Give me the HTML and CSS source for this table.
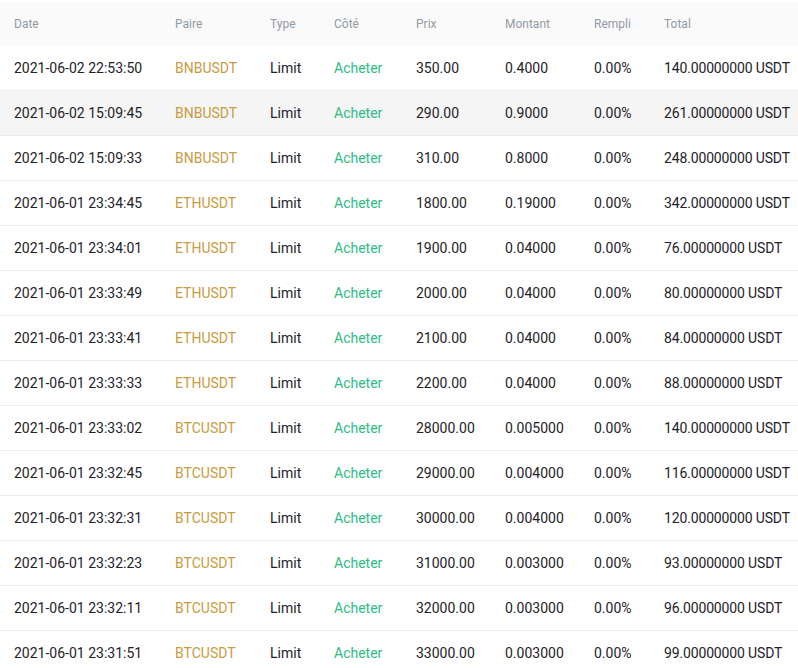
FILE: index.html
```html
<!DOCTYPE html>
<html>
<head>
<meta charset="utf-8">
<link rel="stylesheet" href="styles.css">
</head>
<body>
<div class="orders">
  <div class="row head">
    <div>Date</div><div>Paire</div><div>Type</div><div>Côté</div><div>Prix</div><div>Montant</div><div>Rempli</div><div>Total</div>
  </div>
  <div class="row"><div>2021-06-02 22:53:50</div><div class="pair">BNBUSDT</div><div>Limit</div><div class="buy">Acheter</div><div>350.00</div><div>0.4000</div><div>0.00%</div><div class="total">140.00000000 USDT</div></div>
  <div class="row hover"><div>2021-06-02 15:09:45</div><div class="pair">BNBUSDT</div><div>Limit</div><div class="buy">Acheter</div><div>290.00</div><div>0.9000</div><div>0.00%</div><div class="total">261.00000000 USDT</div></div>
  <div class="row"><div>2021-06-02 15:09:33</div><div class="pair">BNBUSDT</div><div>Limit</div><div class="buy">Acheter</div><div>310.00</div><div>0.8000</div><div>0.00%</div><div class="total">248.00000000 USDT</div></div>
  <div class="row"><div>2021-06-01 23:34:45</div><div class="pair">ETHUSDT</div><div>Limit</div><div class="buy">Acheter</div><div>1800.00</div><div>0.19000</div><div>0.00%</div><div class="total">342.00000000 USDT</div></div>
  <div class="row"><div>2021-06-01 23:34:01</div><div class="pair">ETHUSDT</div><div>Limit</div><div class="buy">Acheter</div><div>1900.00</div><div>0.04000</div><div>0.00%</div><div class="total">76.00000000 USDT</div></div>
  <div class="row"><div>2021-06-01 23:33:49</div><div class="pair">ETHUSDT</div><div>Limit</div><div class="buy">Acheter</div><div>2000.00</div><div>0.04000</div><div>0.00%</div><div class="total">80.00000000 USDT</div></div>
  <div class="row"><div>2021-06-01 23:33:41</div><div class="pair">ETHUSDT</div><div>Limit</div><div class="buy">Acheter</div><div>2100.00</div><div>0.04000</div><div>0.00%</div><div class="total">84.00000000 USDT</div></div>
  <div class="row"><div>2021-06-01 23:33:33</div><div class="pair">ETHUSDT</div><div>Limit</div><div class="buy">Acheter</div><div>2200.00</div><div>0.04000</div><div>0.00%</div><div class="total">88.00000000 USDT</div></div>
  <div class="row"><div>2021-06-01 23:33:02</div><div class="pair">BTCUSDT</div><div>Limit</div><div class="buy">Acheter</div><div>28000.00</div><div>0.005000</div><div>0.00%</div><div class="total">140.00000000 USDT</div></div>
  <div class="row"><div>2021-06-01 23:32:45</div><div class="pair">BTCUSDT</div><div>Limit</div><div class="buy">Acheter</div><div>29000.00</div><div>0.004000</div><div>0.00%</div><div class="total">116.00000000 USDT</div></div>
  <div class="row"><div>2021-06-01 23:32:31</div><div class="pair">BTCUSDT</div><div>Limit</div><div class="buy">Acheter</div><div>30000.00</div><div>0.004000</div><div>0.00%</div><div class="total">120.00000000 USDT</div></div>
  <div class="row"><div>2021-06-01 23:32:23</div><div class="pair">BTCUSDT</div><div>Limit</div><div class="buy">Acheter</div><div>31000.00</div><div>0.003000</div><div>0.00%</div><div class="total">93.00000000 USDT</div></div>
  <div class="row"><div>2021-06-01 23:32:11</div><div class="pair">BTCUSDT</div><div>Limit</div><div class="buy">Acheter</div><div>32000.00</div><div>0.003000</div><div>0.00%</div><div class="total">96.00000000 USDT</div></div>
  <div class="row"><div>2021-06-01 23:31:51</div><div class="pair">BTCUSDT</div><div>Limit</div><div class="buy">Acheter</div><div>33000.00</div><div>0.003000</div><div>0.00%</div><div class="total">99.00000000 USDT</div></div>
</div>
</body>
</html>
```

FILE: styles.css
```css
html, body {
  margin: 0;
  padding: 0;
  background: #ffffff;
}
body {
  font-family: Roboto, "Liberation Sans", sans-serif;
  color: #1e2329;
  padding-top: 2px;
  overflow: hidden;
}
.orders {
  width: 798px;
}
.row {
  display: grid;
  grid-template-columns: 161px 95px 64px 82px 89px 89px 70px 1fr;
  align-items: center;
  height: 44px;
  padding-left: 14px;
  font-size: 14px;
  border-bottom: 1px solid #eaecef;
  white-space: nowrap;
}
.row.head {
  height: 44px;
  background: #fafafa;
  color: #929aa5;
  font-size: 12px;
  border-bottom: none;
}
.row.hover {
  background: #f5f5f5;
}
.pair {
  color: #c99c3f;
}
.buy {
  color: #2ebd85;
}
.total {
  letter-spacing: -0.15px;
}
```
